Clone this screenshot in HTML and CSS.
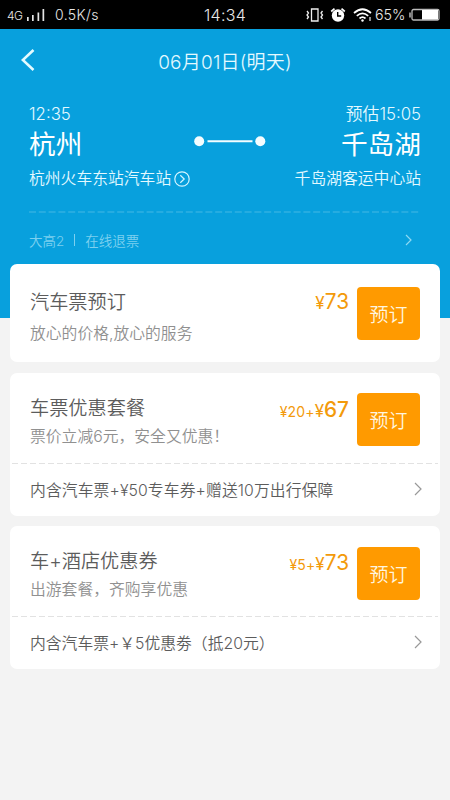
FILE: index.html
```html
<!DOCTYPE html>
<html lang="zh-CN">
<head>
<meta charset="utf-8">
<title>车票预订</title>
<link rel="stylesheet" href="styles.css">
</head>
<body>
<div class="status">
  <span class="net">4G</span>
  <svg class="signal" width="19" height="14" viewBox="0 0 19 14" fill="#e4e4e4"><path d="M0 9h1.700v4H0zM5 7h1.700v6H5zM10.500 4.500h1.700V13h-1.700zM15.500 1h1.700v12h-1.700z"/></svg>
  <span class="speed">0.5K/s</span>
  <span class="clock">14:34</span>
  <div class="tray">
    <svg width="18" height="16" viewBox="0 0 18 16" fill="none" stroke="#eee" stroke-width="1.300"><path d="M5.500 2h6.500v12H5.500zM1 4l1.500 2L1 8l1.500 2L1 12M16.500 4L15 6l1.500 2-1.500 2 1.500 2"/></svg>
    <svg class="alarm" width="16" height="16" viewBox="0 0 16 16"><circle cx="8" cy="8.500" r="6.200" fill="#fff"/><path d="M1.200 4.500L4.500 1.700M11.500 1.700l3.300 2.800" stroke="#fff" stroke-width="1.700"/><path d="M7.700 5v4h3.500" fill="none" stroke="#000" stroke-width="1.400"/></svg>
    <svg class="wifi" width="20" height="16" viewBox="0 0 20 16" fill="none" stroke="#fff" stroke-width="1.700"><path d="M1 6Q9.500-1.500 18 6M3.800 8.800q5.700-5 11.400 0M6.500 11.500q3-2.600 6 0"/><circle cx="9.500" cy="13.500" r="1.200" fill="#fff" stroke="none"/><path d="M17 10v4" stroke-width="1.500" stroke="#bbb"/></svg>
    <span class="percent">65%</span>
    <svg class="battery" width="31" height="14" viewBox="0 0 31 14"><rect x="3" y="1.500" width="27" height="10.500" rx="1.500" fill="none" stroke="#bbb" stroke-width="1.300"/><path d="M1 4.500v5" stroke="#bbb" stroke-width="1.500"/><path d="M13 2h16v9.500H13z" fill="#fff"/></svg>
  </div>
</div>
<header class="hero">
  <nav class="nav">
    <svg class="back" width="14" height="22" viewBox="0 0 14 22"><path d="M12.500 1L1.800 11l10.700 10" fill="none" stroke="#e4fbff" stroke-width="2.600"/></svg>
    <h1>06月01日(明天)</h1>
  </nav>
  <section class="route">
    <div class="stop">
      <div class="time">12:35</div>
      <div class="city">杭州</div>
      <div class="station">杭州火车东站汽车站<svg width="16" height="16" viewBox="0 0 16 16" fill="none" stroke="#d5f5ff" stroke-width="1.200"><circle cx="8" cy="8" r="7.200"/><path d="M6.300 4.200L10.200 8l-3.900 3.800"/></svg></div>
    </div>
    <svg class="line" width="72" height="12" viewBox="0 0 72 12" fill="#f4fdff"><circle cx="5.200" cy="6.200" r="5"/><circle cx="66.300" cy="6.200" r="5"/><path d="M13.500 5.200h45v2h-45z"/></svg>
    <div class="stop end">
      <div class="time">预估15:05</div>
      <div class="city">千岛湖</div>
      <div class="station">千岛湖客运中心站</div>
    </div>
  </section>
  <svg class="divider" width="392" height="2"><path d="M0 1h392" stroke="#45b8e4" stroke-dasharray="7 2.800"/></svg>
  <div class="info">
    <span>大高2</span><i></i><span>在线退票</span>
    <svg width="8" height="12" viewBox="0 0 8 12"><path d="M1 1l5 5-5 5" fill="none" stroke="#8ed9f3" stroke-width="1.200"/></svg>
  </div>
</header>
<main>
  <article class="card first">
    <div class="offer">
      <div class="copy"><h2>汽车票预订</h2><p>放心的价格,放心的服务</p></div>
      <div class="price"><b>¥</b><strong>73</strong></div>
      <button>预订</button>
    </div>
  </article>
  <article class="card">
    <div class="offer">
      <div class="copy"><h2>车票优惠套餐</h2><p>票价立减6元，安全又优惠！</p></div>
      <div class="price"><small>¥20+</small><b>¥</b><strong class="strong">67</strong></div>
      <button>预订</button>
    </div>
    <svg class="rule" width="426" height="2"><path d="M0 .5h426" stroke="#e2e2e2" stroke-dasharray="6 3"/></svg>
    <div class="detail"><span class="wide">内含汽车票+¥50专车券+赠送10万出行保障</span><svg width="9" height="14" viewBox="0 0 9 14"><path d="M1 1l6 6-6 6" fill="none" stroke="#999" stroke-width="1.200"/></svg></div>
  </article>
  <article class="card last">
    <div class="offer">
      <div class="copy"><h2>车+酒店优惠券</h2><p>出游套餐，齐购享优惠</p></div>
      <div class="price"><small>¥5+</small><b>¥</b><strong>73</strong></div>
      <button>预订</button>
    </div>
    <svg class="rule" width="426" height="2"><path d="M0 .5h426" stroke="#e2e2e2" stroke-dasharray="6 3"/></svg>
    <div class="detail"><span>内含汽车票+￥5优惠劵（抵20元）</span><svg width="9" height="14" viewBox="0 0 9 14"><path d="M1 1l6 6-6 6" fill="none" stroke="#999" stroke-width="1.200"/></svg></div>
  </article>
</main>
</body>
</html>
```
FILE: styles.css
```css
* { box-sizing: border-box; margin: 0; padding: 0; }
body {
  width: 450px; height: 800px; overflow: hidden;
  background: #f3f3f3;
  font-family: Inter, "Noto Sans CJK SC", sans-serif;
  font-weight: 350;
}
svg { display: block; flex: none; }
.status {
  height: 29px; background: #000; color: #e8e8e8;
  display: grid;
  grid-template-columns: 20px 28px 149px 50px 1fr;
  align-items: center; padding-left: 7px; white-space: nowrap;
}
.net { font-size: 12px; padding-top: 2px; letter-spacing: -0.5px; }
.speed { font-size: 14px; letter-spacing: 0.400px; }
.clock { font-size: 16px; letter-spacing: 0.300px; }
.tray { display: flex; align-items: center; padding-left: 52px; }
.alarm { margin-left: 6px; }
.wifi { margin-left: 7px; }
.percent { font-size: 14.300px; margin-left: 2px; }
.battery { margin-left: 4px; }
.hero { height: 289px; background: #08a0dd; color: #e4f9ff; }
.nav { height: 65px; display: grid; grid-template-columns: 50px 350px; align-items: center; }
.back { margin-left: 21px; margin-top: -3px; }
.nav h1 { font-size: 19px; font-weight: 350; text-align: center; margin-top: -3px; letter-spacing: 0.200px; }
.route { display: flex; justify-content: space-between; padding: 9px 29px 0; height: 117px; }
.stop { width: 162px; white-space: nowrap; }
.end { text-align: right; }
.time { font-size: 16.800px; line-height: 22px; }
.city { font-size: 26.700px; line-height: 36px; font-weight: 400; color: #fff; margin-top: 1px; }
.station { font-size: 15.800px; line-height: 22px; margin-top: 6px; display: flex; align-items: center; gap: 3px; }
.station svg { margin-top: -1px; }
.end .station { justify-content: flex-end; }
.line { margin: 32px -4px 0 4px; }
.divider { margin-left: 29px; }
.info { display: flex; align-items: center; padding: 0 37px 1px 29px; height: 54px; font-size: 13.500px; color: #7dd0ef; }
.info i { width: 1px; height: 12px; background: #7dd0ef; margin: 0 10px; }
.info svg { margin-left: auto; }
main { margin: -54px 10px 0; display: grid; gap: 11px; position: relative; }
.card { height: 143px; background: #fff; border-radius: 7px; }
.card.first { height: 98px; }
.card.last { margin-top: -1px; }
.offer { height: 90px; display: grid; grid-template-columns: 200px 119px 8px 63px; padding: 20px 20px 0; }
.first .offer { padding-top: 23px; }
.copy { white-space: nowrap; }
h2 { font-size: 19.200px; line-height: 28px; font-weight: 350; color: #5c5c5c; margin-top: 1px; }
.copy p { font-size: 15.800px; line-height: 24px; margin-top: 3px; color: #909090; }
.first .copy p { margin-top: 6px; }
.price { color: #f39a0b; display: flex; justify-content: flex-end; align-items: baseline; line-height: 30px; padding-top: 2px; }
.first .price { padding-top: 0; }
.price small { font-size: 14px; font-weight: 400; letter-spacing: 0.150px; }
.price b { font-size: 17px; font-weight: 400; }
.price strong { font-size: 20.800px; font-weight: 400; }
.price .strong { font-weight: 450; }
button { grid-column: 4; height: 53px; border: 0; border-radius: 4px; background: #ff9a00; color: #fff5df; font: inherit; font-size: 19px; }
.last button { margin-top: 1px; }
.rule { margin-left: 2px; }
.detail { height: 50px; display: flex; justify-content: space-between; align-items: center; padding: 0 17px 2px 20px; font-size: 15.800px; color: #5c5c5c; white-space: nowrap; }
.wide { letter-spacing: 0.100px; }
```
